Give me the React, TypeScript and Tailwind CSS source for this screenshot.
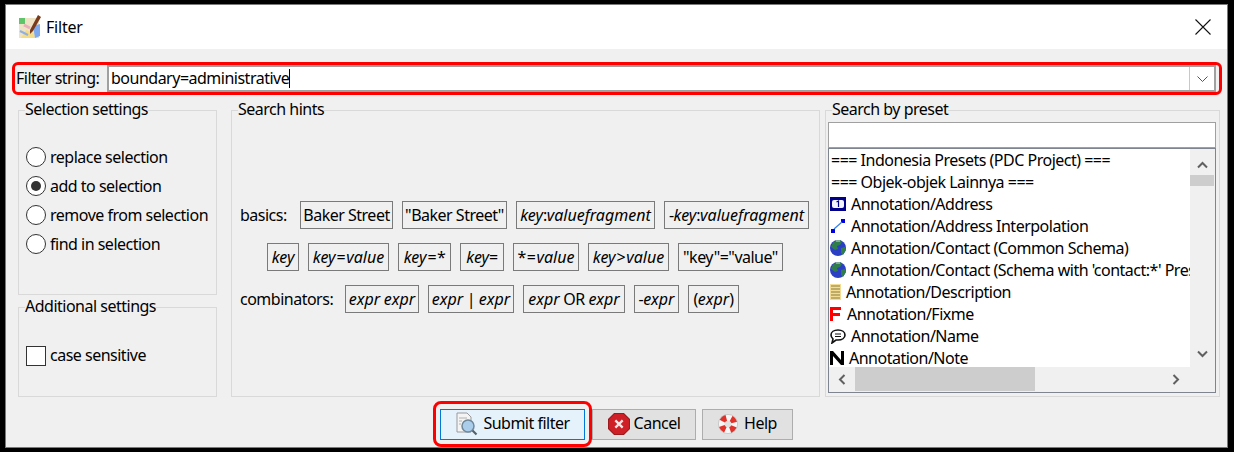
import type { ReactNode } from 'react';

const i = (s: string) => <span className="italic tracking-normal">{s}</span>;
const op = (s: string) => <span className="mx-px">{s}</span>;

function Chip({ w, children }: { w: string; children: ReactNode }) {
  return (
    <div className={`h-[28px] ${w} shrink-0 border border-[#7a7a7a] flex items-center justify-center overflow-hidden whitespace-nowrap`}>
      {children}
    </div>
  );
}

function Radio({ label, checked }: { label: string; checked?: boolean }) {
  return (
    <div className="h-[29px] flex items-center">
      <div className="w-[20px] h-[20px] rounded-full border border-[#333333] bg-white flex items-center justify-center">
        {checked && <div className="w-[10px] h-[10px] rounded-full bg-[#333333]" />}
      </div>
      <span className="ml-[4px]">{label}</span>
    </div>
  );
}

function Box({ title, className, body, children }: { title: string; className: string; body: string; children: ReactNode }) {
  return (
    <fieldset className={`border border-[#d9d9d9] ${className}`}>
      <legend className="ml-[6px] h-[22px] leading-[21px]">{title}</legend>
      <div className={body}>{children}</div>
    </fieldset>
  );
}

function JosmLogo() {
  return (
    <svg width="24" height="26" viewBox="0 0 24 26" className="shrink-0">
      <rect x="1" y="4" width="20" height="20" fill="#eee3c4" />
      <path d="M1 4h6v6H1z" fill="#5fc46a" />
      <path d="M3 24l5-8 8 3 1 5z" fill="#f5dc86" />
      <path d="M15 12l7-2v12l-5 2z" fill="#7fa9ee" />
      <path d="M2 17l8 4" stroke="#8fb0e6" strokeWidth="2" />
      <path d="M6 11l6 3" stroke="#eaaebc" strokeWidth="3" />
      <path d="M12 16L20 1l3 2-8 14-3 3z" fill="#7a3b1c" />
    </svg>
  );
}

function Globe() {
  return (
    <svg width="16" height="16" viewBox="0 0 16 16" className="shrink-0">
      <circle cx="8" cy="8" r="8" fill="#2a3fc4" />
      <path d="M3 2.5L7 0h3l2 2-2 3-3 1 1 3-3 1-4-3z" fill="#2f7d4a" />
      <path d="M11 8l4-1 1 3-3 5-2-2z" fill="#2f7d4a" />
      <path d="M6 1h4" stroke="#cfe0d8" strokeWidth="1" />
    </svg>
  );
}

const presets: { text: string; gap: string; icon: ReactNode }[] = [
  {
    text: 'Annotation/Address',
    gap: 'ml-[5px]',
    icon: (
      <svg width="16" height="14" viewBox="0 0 16 14" className="shrink-0">
        <rect width="16" height="14" fill="#00008b" />
        <rect x="2" y="3" width="12" height="8" rx="2" fill="#f2f4ff" />
        <path d="M6.5 5l2-1v6" stroke="#00008b" strokeWidth="1.2" fill="none" />
      </svg>
    ),
  },
  {
    text: 'Annotation/Address Interpolation',
    gap: 'ml-[5px]',
    icon: (
      <svg width="16" height="14" viewBox="0 0 16 14" className="shrink-0">
        <rect x="1" y="10" width="4" height="4" fill="#0000e0" />
        <rect x="11" y="0" width="4" height="4" fill="#0000e0" />
        <path d="M4 10l8-7" stroke="#3080f0" strokeWidth="1.2" />
      </svg>
    ),
  },
  { text: 'Annotation/Contact (Common Schema)', gap: 'ml-[5px]', icon: <Globe /> },
  { text: "Annotation/Contact (Schema with 'contact:*' Preset)", gap: 'ml-[5px]', icon: <Globe /> },
  {
    text: 'Annotation/Description',
    gap: 'ml-[5px]',
    icon: (
      <svg width="11" height="16" viewBox="0 0 11 16" className="shrink-0">
        <rect width="11" height="16" fill="#f3dc94" />
        <path d="M1 2h9M1 5h9M1 8h9M1 11h9M1 14h9" stroke="#8a7a3c" strokeWidth="1" />
      </svg>
    ),
  },
  {
    text: 'Annotation/Fixme',
    gap: 'ml-[6px]',
    icon: (
      <svg width="11" height="14" viewBox="0 0 11 14" className="shrink-0">
        <path d="M0 0h11v3H3v3h7v3H3v5H0z" fill="#ff0000" />
      </svg>
    ),
  },
  {
    text: 'Annotation/Name',
    gap: 'ml-[5px]',
    icon: (
      <svg width="16" height="15" viewBox="0 0 16 15" className="shrink-0">
        <path d="M8 1c4 0 7 2 7 5s-3 5-7 5H6l-4 3 1-4C2 9 1 8 1 6c0-3 3-5 7-5z" fill="white" stroke="#111" strokeWidth="1.6" />
        <path d="M5 5h6M5 7.5h6" stroke="#111" strokeWidth="1" />
      </svg>
    ),
  },
  {
    text: 'Annotation/Note',
    gap: 'ml-[5px]',
    icon: (
      <svg width="14" height="14" viewBox="0 0 14 14" className="shrink-0">
        <path d="M0 14V0h3l8 9V0h3v14h-3L3 5v9z" fill="#000" />
      </svg>
    ),
  },
];

export default function App() {
  return (
    <div className="h-[452px] w-[1234px] bg-black pt-[4px] pl-[5px] overflow-hidden font-['Noto_Sans',sans-serif] text-[16px] tracking-[-0.5px] text-black">
      <div className="w-[1223px] h-[444px] border border-[#7a7a7a] bg-[#f0f0f0] flex flex-col">
        <div className="h-[44px] bg-white flex items-center pl-[12px] pr-[16px]">
          <JosmLogo />
          <span className="ml-[4px] tracking-[-0.2px]">Filter</span>
          <svg width="16" height="16" viewBox="0 0 16 16" className="ml-auto">
            <path d="M0.5 0.5l15 15M15.5 0.5l-15 15" stroke="#111" strokeWidth="1.1" />
          </svg>
        </div>

        <div className="mt-[13px] ml-[6px] w-[1210px] h-[33px] border-[3px] border-[#ff0000] rounded-[6px] flex items-center pl-[1px]">
          <span className="w-[91px] shrink-0 -mt-[2px]">Filter string:</span>
          <div className="w-[1109px] h-[27px] bg-white border-2 border-[#a0a0a0] flex items-center pl-[2px]">
            <span className="-mt-[2px]">boundary=administrative</span>
            <div className="w-px h-[19px] bg-black" />
            <div className="ml-auto w-[25px] h-full border-l border-[#c8c8c8] flex items-center justify-center">
              <svg width="11" height="6" viewBox="0 0 11 6">
                <path d="M0.5 0.5l5 5 5-5" stroke="#555" fill="none" />
              </svg>
            </div>
          </div>
        </div>

        <div className="mt-[4px] ml-[12px] flex h-[298px]">
          <div className="w-[199px] flex flex-col">
            <Box title="Selection settings" className="h-[196px]" body="pl-[7px] pt-[21px]">
              <Radio label="replace selection" />
              <Radio label="add to selection" checked />
              <Radio label="remove from selection" />
              <Radio label="find in selection" />
            </Box>
            <Box title="Additional settings" className="mt-px h-[101px]" body="pl-[7px] pt-[27px]">
              <div className="flex items-center">
                <div className="w-[20px] h-[20px] border border-[#333333] bg-white" />
                <span className="ml-[4px] -mt-[2px]">case sensitive</span>
              </div>
            </Box>
          </div>

          <Box title="Search hints" className="ml-[14px] w-[589px]" body="pl-[8px] pt-[80px]">
            <div className="flex items-center gap-[9px]">
              <span className="w-[51px] shrink-0">basics:</span>
              <Chip w="w-[93px]">Baker Street</Chip>
              <Chip w="w-[105px]">"Baker Street"</Chip>
              <Chip w="w-[139px]">{i('key')}:{i('valuefragment')}</Chip>
              <Chip w="w-[145px]">-{i('key')}:{i('valuefragment')}</Chip>
            </div>
            <div className="mt-[14px] ml-[27px] flex items-center gap-[9px]">
              <Chip w="w-[32px]">{i('key')}</Chip>
              <Chip w="w-[81px]">{i('key')}{op('=')}{i('value')}</Chip>
              <Chip w="w-[53px]">{i('key')}{op('=')}*</Chip>
              <Chip w="w-[44px]">{i('key')}=</Chip>
              <Chip w="w-[66px]">*{op('=')}{i('value')}</Chip>
              <Chip w="w-[81px]">{i('key')}{op('>')}{i('value')}</Chip>
              <Chip w="w-[105px]">"key"="value"</Chip>
            </div>
            <div className="mt-[14px] flex items-center gap-[9px]">
              <span className="w-[96px] shrink-0">combinators:</span>
              <Chip w="w-[74px]">{i('expr')}&nbsp;{i('expr')}</Chip>
              <Chip w="w-[86px]">{i('expr')}&nbsp;|&nbsp;{i('expr')}</Chip>
              <Chip w="w-[102px]">{i('expr')}&nbsp;OR&nbsp;{i('expr')}</Chip>
              <Chip w="w-[45px]">-{i('expr')}</Chip>
              <Chip w="w-[51px]">({i('expr')})</Chip>
            </div>
          </Box>

          <Box title="Search by preset" className="ml-[5px] w-[395px]" body="pl-[2px]">
            <div className="w-[388px] h-[26px] bg-white border border-[#a0a0a0] mt-[1px]" />
            <div className="w-[388px] h-[245px] border border-[#7f8590] bg-[#f0f0f0] flex flex-col">
              <div className="flex h-[218px]">
                <div className="w-[361px] h-full bg-white overflow-hidden pl-[1px] whitespace-nowrap">
                  <div className="h-[22px] leading-[22px] pl-[1px]">=== Indonesia Presets (PDC Project) ===</div>
                  <div className="h-[22px] leading-[22px] pl-[1px]">=== Objek-objek Lainnya ===</div>
                  {presets.map((p) => (
                    <div key={p.text} className="h-[22px] flex items-center">
                      {p.icon}
                      <span className={p.gap}>{p.text}</span>
                    </div>
                  ))}
                </div>
                <div className="w-[24px] h-full flex flex-col items-center">
                  <svg width="11" height="8" viewBox="0 0 11 8" className="mt-[12px]">
                    <path d="M1 6.5l4.5-4.5 4.5 4.5" stroke="#606060" strokeWidth="2" fill="none" />
                  </svg>
                  <div className="mt-[6px] w-full h-[11px] bg-[#cdcdcd]" />
                  <svg width="11" height="8" viewBox="0 0 11 8" className="mt-auto mb-[9px]">
                    <path d="M1 1.5l4.5 4.5 4.5-4.5" stroke="#606060" strokeWidth="2" fill="none" />
                  </svg>
                </div>
              </div>
              <div className="h-[24px] flex items-center">
                <svg width="8" height="11" viewBox="0 0 8 11" className="ml-[9px]">
                  <path d="M6.5 1L2 5.5 6.5 10" stroke="#606060" strokeWidth="2" fill="none" />
                </svg>
                <div className="ml-[9px] w-[180px] h-full bg-[#cdcdcd]" />
                <svg width="8" height="11" viewBox="0 0 8 11" className="ml-[137px]">
                  <path d="M1.5 1L6 5.5 1.5 10" stroke="#606060" strokeWidth="2" fill="none" />
                </svg>
              </div>
            </div>
          </Box>
        </div>

        <div className="mt-[4px] ml-[427px] flex items-center">
          <div className="w-[159px] h-[46px] border-[3px] border-[#ff0000] rounded-[8px] flex items-center justify-center">
            <div className="w-[145px] h-[31px] border border-[#0078d7] bg-[#e5f1fb] flex items-center justify-center gap-[5px] pl-px">
              <svg width="22" height="24" viewBox="0 0 22 24">
                <path d="M1 1h10l4 4v15H1z" fill="#f4f4f4" stroke="#9a9a9a" />
                <path d="M3 6h8M3 9h3M3 12h2" stroke="#b0b0b0" />
                <circle cx="12" cy="14" r="6" fill="#a9cdea" stroke="#6f8799" strokeWidth="1.5" />
                <path d="M16.5 18.5l4 4" stroke="#55606a" strokeWidth="2.2" />
              </svg>
              <span className="-mt-[2px]">Submit filter</span>
            </div>
          </div>
          <div className="w-[104px] h-[31px] border border-[#adadad] bg-[#e1e1e1] flex items-center justify-center gap-[4px]">
            <svg width="22" height="22" viewBox="0 0 21 21">
              <path d="M6 0.5h9l5.5 5.5v9L15 20.5H6L0.5 15V6z" fill="#cf2027" stroke="#9a1a1e" />
              <path d="M7 7l7 7M14 7l-7 7" stroke="#f6e6e6" strokeWidth="2.2" />
            </svg>
            <span className="-mt-[2px]">Cancel</span>
          </div>
          <div className="ml-[6px] w-[91px] h-[31px] border border-[#adadad] bg-[#e1e1e1] flex items-center justify-center gap-[6px]">
            <svg width="20" height="20" viewBox="0 0 20 20">
              <circle cx="10" cy="10" r="6.5" fill="none" stroke="#f6f6f6" strokeWidth="6" />
              <circle cx="10" cy="10" r="6.5" fill="none" stroke="#e0322a" strokeWidth="6" strokeDasharray="5.1 5.1" strokeDashoffset="-2.55" />
              <circle cx="10" cy="10" r="9.6" fill="none" stroke="#b5b5b5" strokeWidth="0.6" />
            </svg>
            <span className="-mt-[2px]">Help</span>
          </div>
        </div>
      </div>
    </div>
  );
}
